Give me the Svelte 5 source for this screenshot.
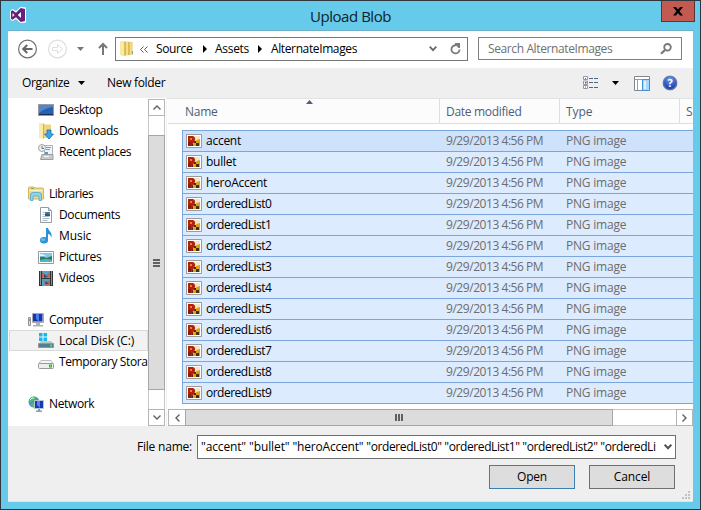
<script>
  const places = [
    { icon: 'desktop', label: 'Desktop', w: 43.5, child: true },
    { icon: 'downloads', label: 'Downloads', w: 59.5, child: true },
    { icon: 'recent', label: 'Recent places', w: 72.2, child: true },
    null,
    { icon: 'libraries', label: 'Libraries', w: 44.3 },
    { icon: 'documents', label: 'Documents', w: 61.2, child: true },
    { icon: 'music', label: 'Music', w: 32.3, child: true },
    { icon: 'pictures', label: 'Pictures', w: 42.4, child: true },
    { icon: 'videos', label: 'Videos', w: 35.5, child: true },
    null,
    { icon: 'computer', label: 'Computer', w: 54.2 },
    { icon: 'disk', label: 'Local Disk (C:)', w: 75.3, child: true, active: true },
    { icon: 'drive', label: 'Temporary Stora', w: 88.6, child: true },
    null,
    { icon: 'network', label: 'Network', w: 45.3 },
  ];

  const files = [
    { name: 'accent', w: 35 },
    { name: 'bullet', w: 30.2 },
    { name: 'heroAccent', w: 61 },
    ...Array.from({ length: 10 }, (_, i) => ({ name: `orderedList${i}`, w: 65.3 })),
  ];

  const selection = [
    { name: 'accent', w: 48 },
    { name: 'bullet', w: 43.5 },
    { name: 'heroAccent', w: 73.8 },
    { name: 'orderedList0', w: 78 },
    { name: 'orderedList1', w: 78 },
    { name: 'orderedList2', w: 78 },
    { name: 'orderedList3', w: 78 },
  ];

  // Tracks a label in or out so that it fills the given advance width.
  function fit(node, width) {
    const natural = node.getBoundingClientRect().width;
    node.style.letterSpacing = `${(width - natural) / node.textContent.length}px`;
  }
</script>

{#snippet text(label, w)}<span class="label" use:fit={w}>{label}</span>{/snippet}

{#snippet icon(kind)}
  <svg class="icon" width="16" height="16" viewBox="0 0 16 16">
    {#if kind === 'desktop'}
      <rect x=".5" y="2.5" width="15" height="11" fill="#2c5db0" stroke="#9b9b9b" />
      <path d="M1 3h14v2Q7 6 1 11z" fill="#4f86d2" />
      <path d="M1 12.5h14" stroke="#1b2f55" />
    {:else if kind === 'downloads'}
      <path d="M1 .5h5l1 1h6V15H1z" fill="#f0d47c" />
      <path d="M1 .5h4V16L1 14.500z" fill="#fbeaa9" />
      <path d="M5.500 1V15.500" stroke="#d3ad48" />
      <path d="M9 7h4v4h2.500L11 16 6.500 11H9z" fill="#39a6e8" stroke="#1d70b5" stroke-width=".8" />
    {:else if kind === 'recent'}
      <path d="M6.500 1.500h8v9h-8z" fill="#eef4f7" stroke="#a9b2b6" />
      <path d="M8 3.500h2M8 5.500h4M10 3.500h3" stroke="#65a5c8" />
      <path d="M4 10.500h11v5H2.500z" fill="#c7cbcd" stroke="#9b9fa2" />
      <path d="M6 12.500h5" stroke="#f7f7f7" />
      <path d="M7 8h3v2H7z" fill="#4ea1cd" />
      <circle cx="4" cy="4" r="3.500" fill="#eef0f1" stroke="#a0a5a8" />
      <path d="M4 2v2.500h2" stroke="#67727b" fill="none" />
    {:else if kind === 'libraries'}
      <path d="M.5 2q0-1 1-1H6l1 1h7.500q1 0 1 1v10H.5z" fill="#f3da83" stroke="#d4b45b" />
      <path d="M3 2.500h3" stroke="#6fb543" />
      <path d="M1 4.500h14" stroke="#fdf2c2" />
      <path d="M2.500 14.500V9q0-2.500 2.500-2.500h6q2.500 0 2.500 2.500v5.500H11V11q0-1-1-1H6q-1 0-1 1v3.500z" fill="#8ed5ef" stroke="#4ba7cf" stroke-width=".8" />
    {:else if kind === 'documents'}
      <path d="M2.500.5h8l3 3v12h-11z" fill="#fff" stroke="#959ca1" />
      <path d="M10.500.5v3h3" fill="#dce3e7" stroke="#959ca1" />
      <path d="M4.500 5.500h2M4.500 7.500h2M4.500 9.500h7M4.500 11.500h7M4.500 13.500h5" stroke="#adb7c7" />
      <path d="M7 5h5v4H7z" fill="#2c86c8" />
      <path d="M7 8q2-3 5 0v1H7z" fill="#3c5b3c" />
    {:else if kind === 'music'}
      <path d="M8 0h2c.3 3 5 4 3.200 10-.3-2.500-1.500-4-3.200-4v7H8z" fill="#2c91d5" />
      <ellipse cx="6" cy="12.300" rx="4" ry="3.300" fill="#2c91d5" />
      <ellipse cx="5" cy="11.700" rx="2.200" ry="1.400" fill="#68bff0" />
    {:else if kind === 'pictures'}
      <path d="M.5 2.500h15v12H.5z" fill="#fff" stroke="#999" />
      <path d="M2 4h12v9H2z" fill="#84c8ec" />
      <path d="M2 8q4-1 6 1l6-2v4H2z" fill="#347f52" />
      <path d="M2 11q7-2 12 0v2H2z" fill="#4ab5c8" />
      <path d="M2 5q4 0 6 2H2z" fill="#e3f4fb" />
    {:else if kind === 'videos'}
      <path d="M1 1h14v15H1z" fill="#303638" />
      <path d="M4 1h8v7H4zM4 9h8v7H4z" fill="#4fa0d0" />
      <path d="M4 2l4 4 4-5v6H4zM5 10l3 2 4-2v4l-4 2z" fill="#ba684e" />
      <path d="M6 4l4 3-4 1zM8 11l3 3H7z" fill="#4b4964" />
      <path d="M2.500 1.500v14M13.500 1.500v14" stroke="#e8eced" stroke-dasharray="1 1" />
    {:else if kind === 'computer'}
      <path d="M.5 5.500h2v8h-2z" fill="#d9dcdf" stroke="#8d9498" />
      <path d="M1 7h1v2H1z" fill="#60c22e" />
      <path d="M4.500 1.500h11v9h-11z" fill="#e0e2e4" stroke="#a6aaad" />
      <path d="M5 2h9.500v7.500H5z" fill="#1634b4" />
      <path d="M8 2h3v7.500L8 7z" fill="#4c7ce5" />
      <path d="M8 11h4v2H8zM5 13h10v1.500H5z" fill="#aeb3b6" />
    {:else if kind === 'disk'}
      <path d="M1 0h3.500v3.500H1zM5.500 0H9v3.500H5.500zM1 4.500h3.500V8H1zM5.500 4.500H9V8H5.500z" fill="#13b9ed" />
      <path d="M3 8h10l3 3.500H0z" fill="#c1c6c9" />
      <path d="M.5 10.500h15v4H.5z" fill="#51818c" stroke="#8f989c" />
      <path d="M13 11.500v2" stroke="#6df07c" stroke-width="1.500" />
    {:else if kind === 'drive'}
      <path d="M3 6.500h10l2.500 3.500H.5z" fill="#f4f4f4" stroke="#bebebe" />
      <rect x=".5" y="9.500" width="15" height="5" rx="1" fill="#ededed" stroke="#999" />
      <path d="M11 10.500h3v3h-3z" fill="#678d5d" />
      <path d="M12.500 11v2" stroke="#48ec3f" />
    {:else if kind === 'network'}
      <circle cx="6" cy="6" r="5.500" fill="#3a9ed4" />
      <path d="M3 1.500Q6 0 8 1L6 4 3 6 1 5zM4 7l3 1-1 3.500L3 10z" fill="#62bd48" />
      <path d="M2 4q2-3 4-2" stroke="#d5f3fc" fill="none" />
      <path d="M6.500 4.500h9v8h-9z" fill="#1739b7" stroke="#b7c4d2" />
      <path d="M9 5h3v7L9 9z" fill="#5686e5" />
      <path d="M10 13h2v1.500h2V16H8v-1.500h2z" fill="#929ba1" />
    {:else if kind === 'png'}
      <path d="M.5 1.500h15v13H.5z" fill="#fff" stroke="#9b9b9b" />
      <path d="M2 3h12v10H2z" fill="#f3e6c4" />
      <path d="M2 3h5q2.500 1 2 4L8 9l-1 2-1 2H2z" fill="#b5200e" />
      <path d="M4 5h2v2H4z" fill="#e8851e" />
      <path d="M2 9h3v4H2z" fill="#8c1c12" />
      <path d="M9 9l1.500-2L14 6v7H7v-2z" fill="#e3a012" />
      <path d="M8 8h2v2H8zM10 10h3v3h-3zM6 11h1v2H6z" fill="#4a2c14" />
    {/if}
  </svg>
{/snippet}

<div class="window">
  <header class="title">
    <svg class="logo" width="16" height="16" viewBox="0 0 16 16">
      <path d="M10.500 0L16 .5v15l-5.500.5L6 12l-3.500 2L0 12V4l2.500-2L6 4z" fill="#fff" />
      <path fill-rule="evenodd" d="M10.800 1L15 2v12l-4.200 1L6 10.200 2.500 12.700 1 11.700V4.300l1.500-1L6 5.800zM11 5L7.800 8 11 11zM2.500 6v4l2-2z" fill="#68217a" />
    </svg>
    <h1>{@render text('Upload Blob', 81)}</h1>
    <button class="close" aria-label="Close">
      <svg width="10" height="9" viewBox="0 0 10 9"><path d="M0 0h3l2 2.500L7 0h3L6.500 4.200 10 8.500H7L5 6 3 8.500H0l3.500-4.300z" fill="#000" /></svg>
    </button>
  </header>

  <main>
    <nav class="address-row">
      <svg class="history" width="92" height="24" viewBox="0 0 92 24">
        <circle cx="9.500" cy="12" r="8.900" fill="none" stroke="#717171" stroke-width="1.200" />
        <path d="M5.500 12H14.500M9.200 8L5.200 12l4 4" fill="none" stroke="#666" stroke-width="2" />
        <circle cx="39.500" cy="12" r="8.900" fill="none" stroke="#dedede" stroke-width="1.200" />
        <path d="M34.500 10.500h5v-3l5 4.500-5 4.500v-3h-5z" fill="none" stroke="#dedede" />
        <path d="M59 10h7l-3.500 4z" fill="#777" />
        <path d="M85 18V8M81 11l4-4 4 4" fill="none" stroke="#777" stroke-width="2" />
      </svg>
      <div class="address">
        <svg class="folder" width="14" height="17" viewBox="0 0 14 17">
          <path d="M0 1h5l1 1h6.500v13H0z" fill="#e8c961" />
          <path d="M0 1h4.500v15.500L0 15z" fill="#fae9a3" />
          <path d="M6 1.500h2.500V16L6 15zM9.500 1.500h2V15h-2z" fill="#f5df88" />
          <path d="M5 2v14M9 2v13" stroke="#cfa63f" />
          <path d="M12.500 11v3" stroke="#65a6cd" />
        </svg>
        <svg class="more" width="8" height="7" viewBox="0 0 8 7"><path d="M3.500.5l-3 3 3 3M7.500.5l-3 3 3 3" fill="none" stroke="#555" /></svg>
        <span class="crumb source">{@render text('Source', 36.3)}</span>
        <svg width="4" height="8" viewBox="0 0 4 8"><path d="M0 0l4 4-4 4z" /></svg>
        <span class="crumb assets">{@render text('Assets', 34)}</span>
        <svg width="4" height="8" viewBox="0 0 4 8"><path d="M0 0l4 4-4 4z" /></svg>
        <span class="crumb images">{@render text('AlternateImages', 86)}</span>
        <svg class="history-drop" width="8" height="6" viewBox="0 0 8 6"><path d="M.7.7L4 4.200 7.300.7" fill="none" stroke="#666" stroke-width="1.700" /></svg>
        <svg class="refresh" width="11" height="12" viewBox="0 0 11 12">
          <path d="M6 2.300A4.100 4.100 0 1 0 9.600 6.500" fill="none" stroke="#7b7b7b" stroke-width="1.800" />
          <path d="M5 0h5v5H8.500L5 1.500z" fill="#7b7b7b" />
        </svg>
      </div>
      <div class="search">
        {@render text('Search AlternateImages', 124.3)}
        <svg width="12" height="12" viewBox="0 0 12 12"><circle cx="7.500" cy="4.300" r="3.300" fill="none" stroke="#777" stroke-width="1.800" /><path d="M5 7L1 10.800" stroke="#777" stroke-width="2.200" /></svg>
      </div>
    </nav>

    <div class="toolbar">
      <span class="organize">{@render text('Organize', 47.5)}</span>
      <svg class="caret" width="7" height="4" viewBox="0 0 7 4"><path d="M0 0h7L3.500 4z" /></svg>
      <span class="new">{@render text('New folder', 58.3)}</span>
      <svg class="view" width="16" height="14" viewBox="0 0 16 14">
        <path d="M.5.5h4v3h-4zM.5 5h4v3.500h-4zM.5 9.500h4v3h-4z" fill="#fff" stroke="#8a99b0" />
        <path d="M2 2h1v1H2z" fill="#476a98" /><path d="M2 6h1.500v1.500H2z" fill="#d81d1d" /><path d="M2 10.500h1v1H2z" fill="#3f76bc" />
        <path d="M6 2.500h4m1 0h4M6 6.500h4m1 0h4M6 11.500h4m1 0h4" stroke="#55677f" />
      </svg>
      <svg class="caret" width="7" height="4" viewBox="0 0 7 4"><path d="M0 0h7L3.500 4z" /></svg>
      <svg class="pane" width="16" height="15" viewBox="0 0 16 15">
        <path d="M.5.5h15v14H.5z" fill="#fff" stroke="#7e8790" />
        <path d="M1 3.500h14M3.500 4v10" stroke="#969ea5" />
        <path d="M8.500 3.500h7v11h-7z" fill="#a9d6fb" stroke="#3991df" /><path d="M10 5h2v8h-2z" fill="#dff1ff" />
      </svg>
      <div class="help">?</div>
    </div>

    <div class="browser">
      <aside>
        <div class="tree">
          {#each places as place}
            {#if place}
              <div class="place" class:child={place.child} class:active={place.active}>
                {@render icon(place.icon)}{@render text(place.label, place.w)}
              </div>
            {:else}
              <div class="place"></div>
            {/if}
          {/each}
        </div>
        <div class="vscroll">
          <div class="vbutton"><svg width="8" height="5" viewBox="0 0 8 5"><path d="M.5 4.500L4 1l3.500 3.500" fill="none" stroke="#606060" stroke-width="1.400" /></svg></div>
          <div class="vspace"></div>
          <div class="vthumb"><i></i><i></i><i></i></div>
          <div class="vtail"></div>
          <div class="vbutton"><svg width="8" height="5" viewBox="0 0 8 5"><path d="M.5.5L4 4 7.500.5" fill="none" stroke="#606060" stroke-width="1.400" /></svg></div>
        </div>
      </aside>

      <section>
        <div class="columns">
          <div class="col name">{@render text('Name', 32.5)}
            <svg class="sort" width="7" height="4" viewBox="0 0 7 4"><path d="M3.500 0L7 4H0z" fill="#4c607a" /></svg>
          </div>
          <div class="col date">{@render text('Date modified', 75.5)}</div>
          <div class="col type">{@render text('Type', 26.5)}</div>
          <div class="col size">{@render text('S', 7)}</div>
        </div>
        <div class="files">
          {#each files as file}
            <div class="file">
              {@render icon('png')}
              <span class="filename">{@render text(file.name, file.w)}</span>
              <span class="stamp">{@render text('9/29/2013 4:56 PM', 97.2)}</span>
              <span class="kind">{@render text('PNG image', 60.3)}</span>
            </div>
          {/each}
        </div>
        <div class="hscroll">
          <div class="hbutton"><svg width="5" height="8" viewBox="0 0 5 8"><path d="M4.500.5L1 4l3.500 3.500" fill="none" stroke="#606060" stroke-width="1.400" /></svg></div>
          <div class="hthumb"><i></i><i></i><i></i></div>
          <div class="hspace"></div>
          <div class="hbutton right"><svg width="5" height="8" viewBox="0 0 5 8"><path d="M.5.5L4 4 .5 7.500" fill="none" stroke="#606060" stroke-width="1.400" /></svg></div>
        </div>
      </section>
    </div>

    <footer>
      <div class="field">
        <span class="caption">{@render text('File name:', 55)}</span>
        <div class="input">
          <div class="value">
            {#each selection as item}{@render text(`"${item.name}" `, item.w)}{/each}
          </div>
          <svg width="8" height="6" viewBox="0 0 8 6"><path d="M.7.7L4 4.300 7.300.7" fill="none" stroke="#555" stroke-width="2" /></svg>
        </div>
      </div>
      <div class="actions">
        <button class="primary">{@render text('Open', 30)}</button>
        <button>{@render text('Cancel', 36.500)}</button>
      </div>
      <svg class="grip" width="8" height="8" viewBox="0 0 8 8"><path d="M6 0h2v2H6zM3 3h2v2H3zM6 3h2v2H6zM0 6h2v2H0zM3 6h2v2H3zM6 6h2v2H6z" fill="#c3c3c3" /></svg>
    </footer>
  </main>
</div>

<style>
  * { box-sizing: border-box; }
  svg { display: block; flex: none; }
  .window {
    width: 701px; height: 510px;
    border: 1px solid #30363b;
    background: #66caea;
    font: 12px/16px "Open Sans", "Noto Sans", sans-serif;
    color: #000;
    overflow: hidden;
  }
  .label { display: inline-block; white-space: pre; flex: none; }
  .title { position: relative; height: 30px; display: flex; justify-content: center; border-bottom: 1px solid #6fb0cb; margin: 0 7px; }
  .logo { position: absolute; left: 2px; top: 6px; }
  h1 { margin: 5px 0 0; font-size: 15px; line-height: 20px; font-weight: 400; color: #10232b; }
  .close {
    position: absolute; right: -2px; top: -1px; width: 34px; height: 22px; padding: 0;
    display: flex; align-items: center; justify-content: center;
    border: 1px solid #5a3437; background: #c35a51;
  }
  main { width: 685px; height: 471px; margin-left: 7px; background: #fff; display: flex; flex-direction: column; }

  .address-row { height: 37px; flex: none; display: flex; padding: 6px 11px 0 10px; align-items: flex-start; }
  .history { width: 92px; overflow: visible; }
  .address { width: 353px; height: 24px; margin-left: 5px; border: 1px solid #777; display: flex; align-items: center; }
  .folder { margin-left: 4px; margin-top: -1px; }
  .more { margin-left: 6px; }
  .source { margin-left: 8px; width: 47px; }
  .assets { margin-left: 8px; width: 43px; }
  .images { margin-left: 9px; width: 158px; }
  .refresh { margin-left: 13px; }
  .search { width: 204px; height: 23px; margin-left: 10px; border: 1px solid #808080; padding: 0 9px; display: flex; justify-content: space-between; align-items: center; color: #707070; }

  .toolbar { height: 30px; flex: none; background: #efefef; display: flex; align-items: center; padding-left: 14px; }
  .organize { width: 56px; }
  .new { margin-left: 22px; width: 476px; }
  .view { margin-right: 13px; }
  .pane { margin: 0 13px 0 15px; }
  .help {
    width: 14px; height: 14px; border-radius: 50%; text-align: center;
    background: radial-gradient(circle at 50% 20%, #6e9af0, #173fae 75%);
    box-shadow: inset 0 0 0 1px #5877a5, 0 0 0 .5px #8c98ad;
    color: #fff; font-weight: 700; font-size: 11px; line-height: 14px;
  }

  .browser { height: 328px; flex: none; display: flex; }
  aside { width: 159px; display: flex; padding-top: 1px; border-right: 1px solid #f0f0f0; }
  .tree { width: 140px; overflow: hidden; }
  .place { height: 21px; display: flex; align-items: center; gap: 5px; padding-left: 20px; }
  .place.child { padding-left: 30px; }
  .place.active { margin-left: 1px; padding-left: 28px; background: #f2f2f2; border: 1px solid #dadada; }
  .vscroll { width: 17px; display: flex; flex-direction: column; }
  .vbutton { height: 17px; flex: none; border: 1px solid #b5b5b5; display: flex; align-items: center; justify-content: center; }
  .vspace { height: 19px; border: solid #c8c8c8; border-width: 0 1px; }
  .vthumb { height: 255px; background: #dcdcdc; border: 1px solid #a6a6a6; display: flex; flex-direction: column; gap: 1px; align-items: center; justify-content: center; }
  .vthumb i { width: 7px; height: 2px; background: #606060; }
  .vtail { flex: 1; border: solid #c8c8c8; border-width: 0 1px; }

  section { width: 526px; padding-left: 1px; border-top: 1px solid #e2e2e2; display: flex; flex-direction: column; overflow: hidden; }
  .columns { height: 25px; flex: none; display: flex; background: #fcfcfc; border-bottom: 1px solid #dedede; color: #4c607a; }
  .col { position: relative; padding: 5px 0 0 6px; border-right: 1px solid #dedede; overflow: hidden; flex: none; }
  .name { width: 272px; padding-left: 17px; }
  .date, .type { width: 120px; }
  .size { width: 13px; border-right: 0; }
  .sort { position: absolute; left: 138px; top: 1px; }
  .files { margin: 6px 0 0 14px; border: solid #7ba5dc; border-width: 0 0 1px 1px; }
  .file { height: 21px; border-top: 1px solid #7ba5dc; background: #ddebfe; display: flex; align-items: center; padding-left: 3px; }
  .file:first-child { background: #cfe2fc; }
  .filename { width: 240px; margin-left: 4px; }
  .stamp { width: 120px; color: #6d6d6d; }
  .kind { color: #6d6d6d; }
  .hscroll { height: 17px; margin-top: auto; flex: none; display: flex; }
  .hbutton { width: 17px; flex: none; border: 1px solid #b5b5b5; border-right: 0; display: flex; align-items: center; justify-content: center; }
  .hbutton.right { border-right: 1px solid #b5b5b5; }
  .hthumb { width: 428px; background: #dcdcdc; border: 1px solid #a6a6a6; display: flex; gap: 1px; align-items: center; justify-content: center; }
  .hthumb i { width: 2px; height: 7px; background: #606060; }
  .hspace { flex: 1; border: solid #c8c8c8; border-width: 1px 0; }

  footer { position: relative; flex: 1; background: #efefef; padding-top: 9px; border-bottom: 1px solid #e3e3e3; }
  .field { display: flex; }
  .caption { width: 189px; padding: 4px 5px 0 0; text-align: right; }
  .input { width: 479px; height: 24px; border: 1px solid #707070; background: #fff; display: flex; align-items: center; }
  .value { display: flex; width: 455px; height: 16px; margin: 0 8px 0 3px; overflow: hidden; }
  .actions { display: flex; gap: 14px; padding: 6px 0 0 481px; }
  .actions button { width: 86px; height: 24px; padding: 0; border: 1px solid #707070; background: #dddddd; font: inherit; color: #000; }
  .actions .primary { border-color: #3c7fb1; }
  .grip { position: absolute; right: 3px; bottom: 2px; }
</style>
